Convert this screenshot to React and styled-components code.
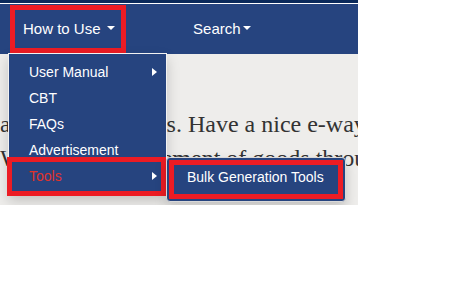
import styled, { createGlobalStyle } from 'styled-components';

const GlobalStyle = createGlobalStyle`
  body {
    margin: 0;
    background: #fff;
  }
`;

const Frame = styled.div`
  position: relative;
  width: 358px;
  height: 205px;
  overflow: hidden;
  background: #eeedeb;
  font-family: "Liberation Sans", Arial, sans-serif;
`;

const TopStrip = styled.div`
  height: 3px;
  background: #0b2a5b;
  border-bottom: 1px solid #fff;
`;

const NavBar = styled.nav`
  display: flex;
  align-items: center;
  height: 50px;
  padding-left: 10px;
  background: #26447f;
`;

const NavItem = styled.div`
  display: flex;
  align-items: center;
  box-sizing: border-box;
  height: 48px;
  margin-left: ${p => p.$gap || 0}px;
  padding: 0 6px 2px 8px;
  border: 5px solid ${p => (p.$marked ? '#ec1c24' : 'transparent')};
  color: #fff;
  font-size: 15px;
`;

const Caret = styled.span`
  display: inline-block;
  width: 0;
  height: 0;
  margin-left: ${p => p.$gap}px;
  border-top: 4px solid #fff;
  border-left: 4px solid transparent;
  border-right: 4px solid transparent;
`;

const Body = styled.p`
  margin: 53px 0 0 0;
  font-family: "Liberation Serif", "Times New Roman", serif;
  font-size: 24px;
  line-height: 34px;
  color: #333;
  white-space: nowrap;
`;

const Menu = styled.ul`
  position: absolute;
  left: 8px;
  top: 53px;
  box-sizing: border-box;
  width: 159px;
  margin: 0;
  padding: 5px 0;
  list-style: none;
  background: #26447f;
  border: 1px solid #f2f2f2;
  box-shadow: 0 6px 12px rgba(0, 0, 0, 0.18);
`;

const MenuItem = styled.li`
  position: relative;
  display: flex;
  align-items: center;
  justify-content: space-between;
  height: 26px;
  padding: 0 9px 0 20px;
  color: ${p => (p.$active ? '#e2332a' : '#fff')};
  font-size: 14px;

  ${p =>
    p.$marked &&
    `
    &::after {
      content: '';
      position: absolute;
      top: -6px;
      bottom: -7px;
      left: -2px;
      right: 0;
      border: 5px solid #ec1c24;
    }
  `}
`;

const SubArrow = styled.span`
  width: 0;
  height: 0;
  border-left: 5px solid #fff;
  border-top: 4px solid transparent;
  border-bottom: 4px solid transparent;
`;

const SubMenu = styled.div`
  position: absolute;
  left: 166px;
  top: 157px;
  box-sizing: border-box;
  width: 180px;
  padding: 2px;
  background: #26447f;
  border: 1px solid #d9d9d9;
  border-radius: 4px;
  box-shadow: 0 6px 12px rgba(0, 0, 0, 0.18);
`;

const SubItem = styled.div`
  display: flex;
  align-items: center;
  box-sizing: border-box;
  height: 39px;
  padding: 0 0 5px 13px;
  border: 5px solid #ec1c24;
  color: #fff;
  font-size: 14px;
`;

const items = [
  { label: 'User Manual', sub: true },
  { label: 'CBT' },
  { label: 'FAQs' },
  { label: 'Advertisement' },
  { label: 'Tools', sub: true, active: true },
];

export default function App() {
  return (
    <>
      <GlobalStyle />
      <Frame>
        <TopStrip />
        <NavBar>
          <NavItem $marked>
            How to Use
            <Caret $gap={6.5} />
          </NavItem>
          <NavItem $gap={54}>
            Search
            <Caret $gap={2} />
          </NavItem>
        </NavBar>
        <Body>
          as all stakeholders. Have a nice e-waybill experience.
          <br />
          Without the movement of goods through
        </Body>
        <Menu>
          {items.map(item => (
            <MenuItem key={item.label} $active={item.active} $marked={item.active}>
              {item.label}
              {item.sub && <SubArrow />}
            </MenuItem>
          ))}
        </Menu>
        <SubMenu>
          <SubItem>Bulk Generation Tools</SubItem>
        </SubMenu>
      </Frame>
    </>
  );
}
